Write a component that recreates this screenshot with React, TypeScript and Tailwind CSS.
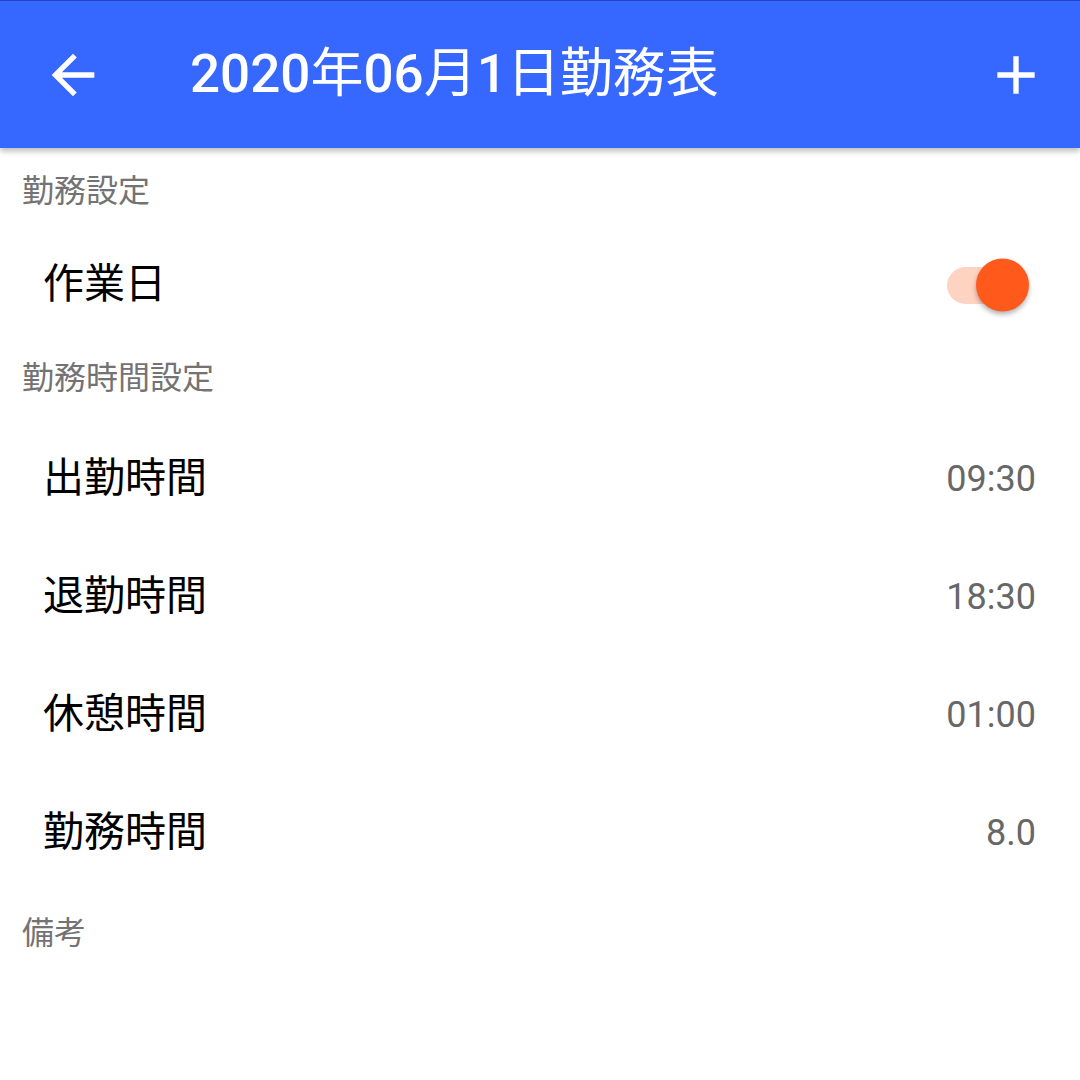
import React from 'react';

const font = { fontFamily: 'Roboto, "Noto Sans CJK JP", sans-serif' };

const SectionLabel = ({ text, h }: { text: string; h: string }) => (
  <div className={`flex items-center pl-[22px] ${h} text-[32px] text-[#737373]`}>{text}</div>
);

const TimeRow = ({ label, value }: { label: string; value: string }) => (
  <div className="flex h-[118px] items-center justify-between pl-[43px] pr-[44px]">
    <span className="text-[41px] text-black">{label}</span>
    <span className="text-[36px] text-[#676767]">{value}</span>
  </div>
);

const App = () => {
  const rows = [
    { label: '出勤時間', value: '09:30' },
    { label: '退勤時間', value: '18:30' },
    { label: '休憩時間', value: '01:00' },
    { label: '勤務時間', value: '8.0' },
  ];

  return (
    <div className="h-[1080px] w-[1080px] overflow-hidden bg-white" style={font}>
      {/* Toolbar */}
      <div className="relative z-10 flex h-[148px] items-center border-t border-[#2443c8] bg-[#3668ff] shadow-[0_3px_6px_rgba(0,0,0,0.28)]">
        <div className="flex w-[146px] justify-center">
          <svg width="64" height="64" viewBox="0 0 24 24" fill="white">
            <path d="M20 11H7.83l5.59-5.59L12 4l-8 8 8 8 1.41-1.41L7.83 13H20v-2z" />
          </svg>
        </div>
        <div className="ml-[44px] flex-1 text-[53px] font-medium leading-none text-white">
          2020<span className="font-normal">年</span>06<span className="font-normal">月</span>1
          <span className="font-normal">日勤務表</span>
        </div>
        <div className="flex w-[128px] justify-center">
          <svg width="64" height="64" viewBox="0 0 24 24" fill="white">
            <path d="M19 13h-6v6h-2v-6H5v-2h6V5h2v6h6v2z" />
          </svg>
        </div>
      </div>

      <SectionLabel text="勤務設定" h="h-[86px]" />

      <div className="flex h-[102px] items-center justify-between pl-[43px] pr-[59px]">
        <span className="text-[41px] text-black">作業日</span>
        <div className="relative h-[37px] w-[74px]">
          <div className="h-full w-full rounded-full bg-[#ffd3c2]" />
          <div className="absolute right-[-8px] top-1/2 h-[53px] w-[53px] -translate-y-1/2 rounded-full bg-[#ff5a1c] shadow-[0_3px_5px_rgba(0,0,0,0.3)]" />
        </div>
      </div>

      <SectionLabel text="勤務時間設定" h="h-[84px]" />

      {rows.map((r) => (
        <TimeRow key={r.label} label={r.label} value={r.value} />
      ))}

      <SectionLabel text="備考" h="h-[82px]" />
    </div>
  );
};

export default App;
